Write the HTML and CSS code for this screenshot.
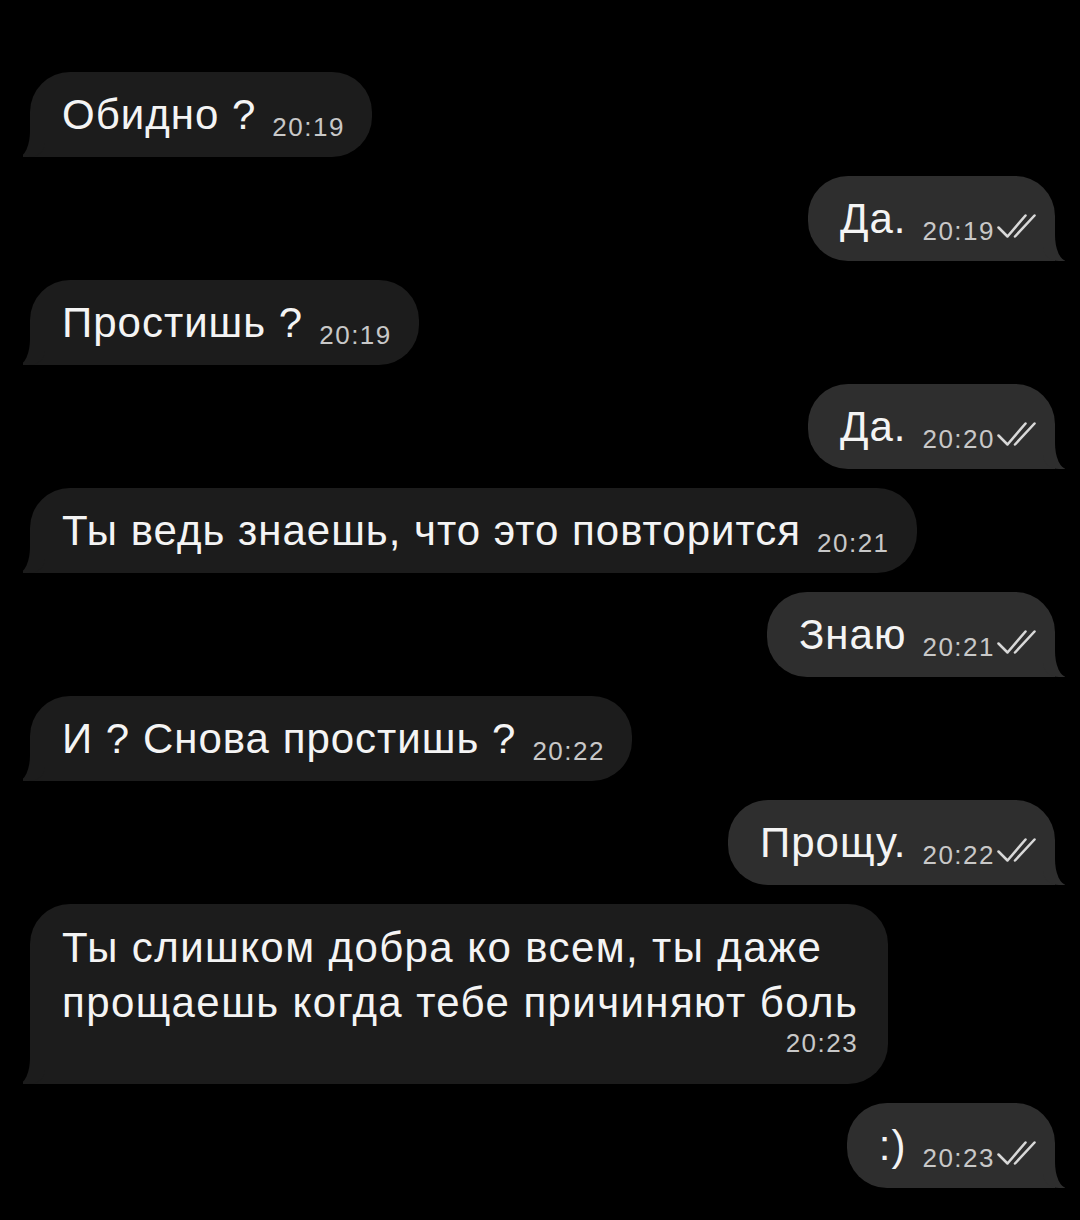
FILE: index.html
```html
<!DOCTYPE html>
<html lang="ru">
<head>
<meta charset="utf-8">
<title>Chat</title>
<link rel="stylesheet" href="styles.css">
</head>
<body>
<div class="chat">
  <div class="row in"><div class="bubble"><span class="txt">Обидно ?</span><span class="time">20:19</span></div></div>
  <div class="row out"><div class="bubble"><span class="txt">Да.</span><span class="time">20:19</span><svg class="ticks" viewBox="0 0 30 20"><path d="M2 11 L8 17 L20 3 M13 17 L26 3"/></svg></div></div>
  <div class="row in"><div class="bubble"><span class="txt">Простишь ?</span><span class="time">20:19</span></div></div>
  <div class="row out"><div class="bubble"><span class="txt">Да.</span><span class="time">20:20</span><svg class="ticks" viewBox="0 0 30 20"><path d="M2 11 L8 17 L20 3 M13 17 L26 3"/></svg></div></div>
  <div class="row in"><div class="bubble"><span class="txt">Ты ведь знаешь, что это повторится</span><span class="time">20:21</span></div></div>
  <div class="row out"><div class="bubble"><span class="txt">Знаю</span><span class="time">20:21</span><svg class="ticks" viewBox="0 0 30 20"><path d="M2 11 L8 17 L20 3 M13 17 L26 3"/></svg></div></div>
  <div class="row in"><div class="bubble"><span class="txt">И ? Снова простишь ?</span><span class="time">20:22</span></div></div>
  <div class="row out"><div class="bubble"><span class="txt">Прощу.</span><span class="time">20:22</span><svg class="ticks" viewBox="0 0 30 20"><path d="M2 11 L8 17 L20 3 M13 17 L26 3"/></svg></div></div>
  <div class="row in"><div class="bubble multi"><span class="txt">Ты слишком добра ко всем, ты даже<br>прощаешь когда тебе причиняют боль</span><span class="time">20:23</span></div></div>
  <div class="row out"><div class="bubble"><span class="txt">:)</span><span class="time">20:23</span><svg class="ticks" viewBox="0 0 30 20"><path d="M2 11 L8 17 L20 3 M13 17 L26 3"/></svg></div></div>
</div>
</body>
</html>
```

FILE: styles.css
```css
html, body {
  margin: 0;
  padding: 0;
  background: #000;
}
body {
  width: 1080px;
  height: 1220px;
  overflow: hidden;
  font-family: "Liberation Sans", Arial, sans-serif;
  color: #f4f4f4;
}
.chat {
  display: flex;
  flex-direction: column;
  gap: 19px;
  padding: 72px 25px 0 30px;
}
.row {
  display: flex;
}
.row.in { justify-content: flex-start; }
.row.out { justify-content: flex-end; }
.bubble {
  position: relative;
  display: flex;
  align-items: baseline;
  height: 85px;
  box-sizing: border-box;
  padding: 0 27px 0 32px;
  border-radius: 40px;
  font-size: 42px;
  letter-spacing: 1px;
  line-height: 85px;
}
.in .bubble {
  background: #1c1c1c;
  border-bottom-left-radius: 0;
}
.out .bubble {
  background: #2e2e2e;
  padding: 0 14px 0 32px;
  border-bottom-right-radius: 0;
}
.txt {
  position: relative;
  z-index: 1;
  white-space: nowrap;
}
.time {
  position: relative;
  top: 7px;
  margin-left: 16px;
  font-size: 26px;
  letter-spacing: 1.5px;
  color: #c8c8c8;
}
.ticks {
  width: 46px;
  height: 30px;
  margin-left: 0;
  align-self: center;
  position: relative;
  top: 7px;
  fill: none;
  stroke: #d8d8d8;
  stroke-width: 1.7;
  stroke-linecap: round;
  stroke-linejoin: round;
}
/* tails */
.in .bubble::before {
  content: "";
  position: absolute;
  left: -7px;
  bottom: 0;
  width: 22px;
  height: 30px;
  background: #1c1c1c;
  border-bottom-right-radius: 16px 14px;
}
.in .bubble::after {
  content: "";
  position: absolute;
  left: -30px;
  bottom: 0;
  width: 30px;
  height: 30px;
  background: #000;
  border-bottom-right-radius: 12px 26px;
}
.out .bubble::before {
  content: "";
  position: absolute;
  right: -10px;
  bottom: 0;
  width: 22px;
  height: 30px;
  background: #2e2e2e;
  border-bottom-left-radius: 16px 14px;
}
.out .bubble::after {
  content: "";
  position: absolute;
  right: -30px;
  bottom: 0;
  width: 30px;
  height: 30px;
  background: #000;
  border-bottom-left-radius: 12px 26px;
}
.bubble.multi {
  display: block;
  height: 180px;
  padding: 16px 30px 0 32px;
  line-height: 55px;
  letter-spacing: 1.4px;
}
.multi .txt {
  display: block;
}
.multi .time {
  display: block;
  top: 0;
  margin: -4px 0 0;
  text-align: right;
  line-height: 34px;
}
```
